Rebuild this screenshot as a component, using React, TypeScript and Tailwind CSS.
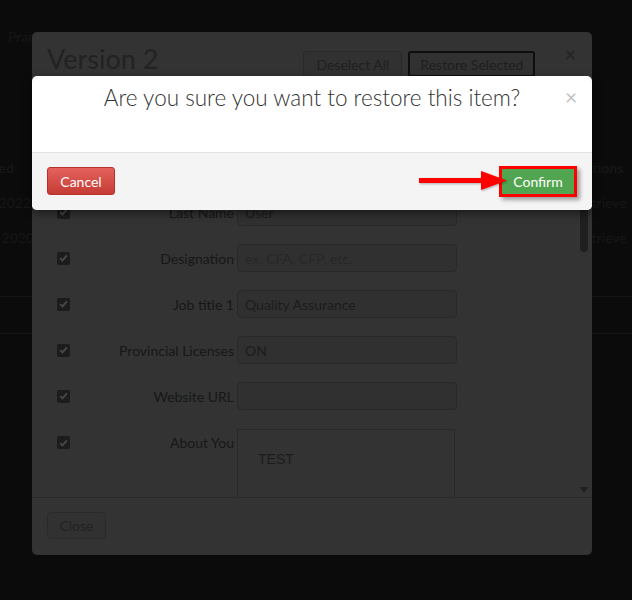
import React from "react";

type Row = { label: string; value?: string; placeholder?: string };

const rows: Row[] = [
  { label: "Email", value: "test.user@example.com" },
  { label: "First Name", value: "Test" },
  { label: "Last Name", value: "User" },
  { label: "Designation", placeholder: "ex. CFA, CFP, etc." },
  { label: "Job title 1", value: "Quality Assurance" },
  { label: "Provincial Licenses", value: "ON" },
  { label: "Website URL", value: "" },
];

function CheckBox() {
  return (
    <div className="flex h-[13px] w-[13px] shrink-0 items-center justify-center rounded-[2px] bg-[#1c1c1c]">
      <svg width="9" height="8" viewBox="0 0 9 8">
        <path d="M1.2 4.1 L3.5 6.4 L7.9 1.4" fill="none" stroke="#484848" strokeWidth="1.9" />
      </svg>
    </div>
  );
}

export default function App() {
  return (
    <div className="relative h-[600px] w-[632px] overflow-hidden bg-[#0b0b0b] font-['Lato',sans-serif]">
      {/* Background page */}
      <div className="pl-[8px] pt-[29px] text-[14px] leading-[16px] text-[#171717]">Practice Profile</div>
      <div className="mt-[113px] text-[14px] leading-[20px] text-[#161616]">
        <div className="flex h-[20px] font-bold">
          <div className="flex w-[14px] justify-end whitespace-nowrap">Created</div>
          <div className="ml-[562px] whitespace-nowrap">Actions</div>
        </div>
        <div className="mt-[15px] flex h-[20px]">
          <div className="flex w-[31px] justify-end whitespace-nowrap">Jun 13, 2022</div>
          <div className="ml-[545px] whitespace-nowrap">Retrieve</div>
        </div>
        <div className="mt-[15px] flex h-[20px]">
          <div className="flex w-[34px] justify-end whitespace-nowrap">Mar 4, 2020</div>
          <div className="ml-[542px] whitespace-nowrap">Retrieve</div>
        </div>
        <div className="mt-[48px] border-t border-[#161616]" />
        <div className="mt-[36px] border-t border-[#161616]" />
      </div>

      {/* Version 2 modal (dimmed) */}
      <div className="absolute left-[32px] top-[32px] flex h-[523px] w-[560px] flex-col rounded-[5px] bg-[#333333]">
        <div className="flex h-[65px] shrink-0 items-start border-b border-[#2b2b2b] pl-[15px] pr-[16px]">
          <div className="pt-[10px] text-[27px] leading-[33px] text-[#222222]">Version 2</div>
          <div className="flex-1" />
          <div className="mt-[19px] flex gap-[6px]">
            <div className="flex h-[26px] items-center rounded-[3px] border border-[#2a2a2a] bg-[#313131] px-[12px] text-[14px] text-[#202020]">
              Deselect All
            </div>
            <div className="flex h-[26px] items-center rounded-[3px] border-2 border-[#0e0e0e] bg-[#313131] px-[10px] text-[14px] text-[#1e1e1e]">
              Restore Selected
            </div>
          </div>
          <div className="ml-[29px] mt-[10px] text-[20px] font-bold leading-[24px] text-[#262626]">×</div>
        </div>

        <div className="flex min-h-0 flex-1 overflow-hidden">
          <div className="flex-1">
            {rows.map((r) => (
              <div key={r.label} className="flex h-[46px] items-center">
                <div className="ml-[25px]">
                  <CheckBox />
                </div>
                <div className="w-[164px] whitespace-nowrap text-right text-[14px] text-[#171717]">{r.label}</div>
                <div className="ml-[3px] flex h-[28px] w-[220px] items-center rounded-[4px] border border-[#292929] bg-[#303030] px-[7px] text-[14px]">
                  {r.value ? (
                    <span className="text-[#1c1c1c]">{r.value}</span>
                  ) : (
                    <span className="text-[#272727]">{r.placeholder ?? ""}</span>
                  )}
                </div>
              </div>
            ))}
            <div className="flex pt-[10px]">
              <div className="ml-[25px] mt-[7px]">
                <CheckBox />
              </div>
              <div className="mt-[4px] w-[164px] text-right text-[14px] leading-[20px] text-[#171717]">About You</div>
              <div className="ml-[3px] h-[110px] w-[218px] border border-[#292929] bg-[#333333] pl-[20px] pt-[19px] font-['Liberation_Sans',sans-serif] text-[14px] leading-[20px] text-[#1c1c1c]">
                TEST
              </div>
            </div>
          </div>
          <div className="flex w-[14px] flex-col justify-between pl-[2px] pr-[4px]">
            <div className="mt-[12px] h-[143px] w-[8px] rounded-full bg-[#1f1f1f]" />
            <div className="mb-[4px] h-0 w-0 border-l-[4.5px] border-r-[4.5px] border-t-[6px] border-l-transparent border-r-transparent border-t-[#1f1f1f]" />
          </div>
        </div>

        <div className="h-[58px] shrink-0 border-t border-[#2a2a2a] pl-[15px] pt-[14px]">
          <div className="flex h-[27px] w-[59px] items-center justify-center rounded-[4px] border border-[#2a2a2a] bg-[#313131] text-[14px] text-[#222222]">
            Close
          </div>
        </div>
      </div>

      {/* Confirm dialog */}
      <div className="absolute left-[32px] top-[76px] w-[560px] overflow-hidden rounded-[5px] bg-white shadow-[0_3px_9px_rgba(0,0,0,0.5)]">
        <div className="flex h-[76px] items-start">
          <div className="w-[40px]" />
          <div className="flex-1 pt-[8px] text-center text-[22.5px] font-light leading-[28px] text-[#333333]">
            Are you sure you want to restore this item?
          </div>
          <div className="w-[40px] pl-[13px] pt-[9px] text-[21px] leading-[24px] text-[#c2c2c2]">×</div>
        </div>
        <div className="relative flex h-[58px] items-center justify-between border-t border-[#e2e2e2] bg-[#f4f4f4] px-[15px]">
          <div className="mt-[-1px] flex h-[28px] w-[68px] items-center justify-center rounded-[3px] border border-[#b8322d] bg-gradient-to-b from-[#e4625d] to-[#c63b35] text-[14px] text-white">
            Cancel
          </div>
          <div className="border-[3px] border-[#ff0000] shadow-[3px_3px_4px_rgba(0,0,0,0.35)]">
            <div className="flex h-[25px] w-[72px] items-center justify-center bg-[#52a550] text-[14px] text-white">
              Confirm
            </div>
          </div>
          <svg
            className="absolute left-[387px] top-[16px] drop-shadow-[1px_1px_1px_rgba(0,0,0,0.3)]"
            width="92"
            height="24"
            viewBox="0 0 92 24"
          >
            <rect x="0" y="9" width="66" height="5" fill="#ff0000" />
            <polygon points="62,2 88,11.5 62,21" fill="#ff0000" />
          </svg>
        </div>
      </div>
    </div>
  );
}
